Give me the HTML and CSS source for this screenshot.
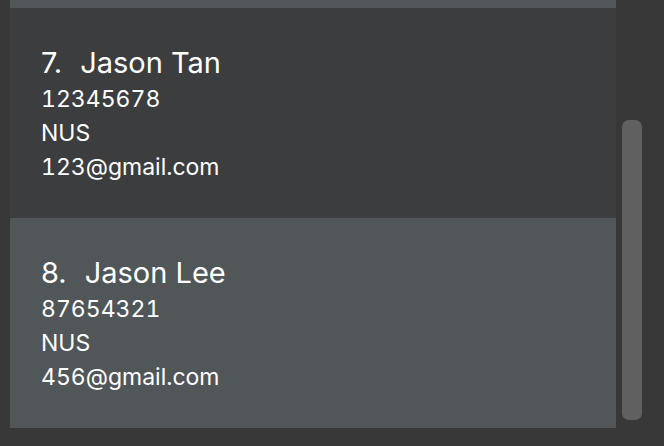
FILE: index.html
```html
<!DOCTYPE html>
<html>
<head>
<meta charset="utf-8">
<link rel="stylesheet" href="styles.css">
</head>
<body>
<div class="pane">
  <div class="list">
    <div class="card odd tail"></div>
    <div class="card even">
      <div class="name"><span class="id">7.</span><span>Jason Tan</span></div>
      <div class="field">12345678</div>
      <div class="field">NUS</div>
      <div class="field">123@gmail.com</div>
    </div>
    <div class="card odd">
      <div class="name"><span class="id">8.</span><span>Jason Lee</span></div>
      <div class="field">87654321</div>
      <div class="field">NUS</div>
      <div class="field">456@gmail.com</div>
    </div>
  </div>
  <div class="track"><div class="thumb"></div></div>
</div>
</body>
</html>
```
FILE: styles.css
```css
html, body {
  margin: 0;
  padding: 0;
  background: #383838;
  width: 664px;
  height: 446px;
  overflow: hidden;
  font-family: Inter, "Liberation Sans", sans-serif;
  color: #ffffff;
}
.pane {
  display: flex;
  height: 446px;
}
.list {
  width: 606px;
  padding-left: 10px;
  display: flex;
  flex-direction: column;
}
.card {
  height: 210px;
  box-sizing: border-box;
  padding: 38px 0 0 31px;
  flex-shrink: 0;
}
.card.tail {
  height: 8px;
  padding: 0;
}
.even { background: #3c3d3f; }
.odd { background: #515658; }
.name {
  font-size: 29px;
  line-height: 34px;
  display: flex;
  gap: 18px;
  margin-bottom: 2px;
}
.field {
  font-size: 23px;
  line-height: 34px;
  font-variant-numeric: tabular-nums;
}
.track {
  width: 48px;
  padding: 120px 0 0 6px;
  box-sizing: border-box;
}
.thumb {
  width: 20px;
  height: 300px;
  border-radius: 7px;
  background: #606060;
}
```
